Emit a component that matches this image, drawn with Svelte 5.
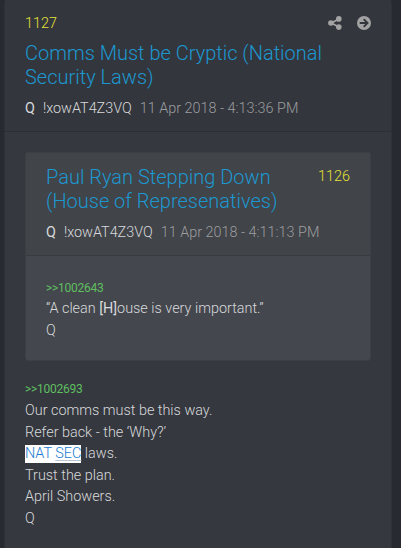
<script lang="ts">
	const trip = '!xowAT4Z3VQ';

	const post = {
		id: 1127,
		title: 'Comms Must be Cryptic (National Security Laws)',
		date: '11 Apr 2018 - 4:13:36 PM',
		ref: '>>1002693'
	};

	const quoted = {
		id: 1126,
		title: 'Paul Ryan Stepping Down (House of Represenatives)',
		date: '11 Apr 2018 - 4:11:13 PM',
		ref: '>>1002643'
	};
</script>

{#snippet meta(date: string)}
	<div class="meta">
		<strong>Q</strong>
		<span class="trip">{trip}</span>
		<time>{date}</time>
	</div>
{/snippet}

<div class="page">
	<article class="card">
		<header class="head">
			<div class="bar">
				<span class="id">{post.id}</span>
				<div class="actions">
					<svg class="share" viewBox="0 0 14 14" aria-label="Share">
						<path d="M11 3 3.2 7 11 11" fill="none" stroke="currentColor" stroke-width="1.8" />
						<circle cx="10.8" cy="2.9" r="2.8" />
						<circle cx="2.9" cy="7" r="2.8" />
						<circle cx="10.8" cy="11.1" r="2.8" />
					</svg>
					<svg class="open" viewBox="0 0 14 14" aria-label="Open">
						<circle cx="7" cy="7" r="7" />
						<path class="arrow" d="M2.7 7H10M6.7 3.2 10.5 7l-3.8 3.8" />
					</svg>
				</div>
			</div>
			<h2 class="title">{post.title}</h2>
			{@render meta(post.date)}
		</header>

		<div class="body">
			<article class="card quoted">
				<header class="head">
					<div class="row">
						<h2 class="title">{quoted.title}</h2>
						<span class="id">{quoted.id}</span>
					</div>
					{@render meta(quoted.date)}
				</header>
				<div class="body">
					<a class="ref" href="#1002643">{quoted.ref}</a>
					<p>“A clean <b>[H]</b>ouse is very important.”</p>
					<p>Q</p>
				</div>
			</article>

			<a class="ref" href="#1002693">{post.ref}</a>
			<p>Our comms must be this way.</p>
			<p>Refer back - the ‘Why?’</p>
			<p><mark>NAT <abbr>SEC</abbr></mark> laws.</p>
			<p>Trust the plan.</p>
			<p>April Showers.</p>
			<p>Q</p>
		</div>
	</article>
</div>

<style>
	:global(body) {
		background: #272a31;
	}

	.page {
		box-sizing: border-box;
		height: 548px;
		padding: 0 9px 0 4px;
		overflow: hidden;
		background: #272a31;
		color: #d8d9db;
		font-family: Roboto, 'Liberation Sans', sans-serif;
		font-size: 14.4px;
		font-weight: 300;
		line-height: 21.6px;
	}

	.card {
		box-sizing: border-box;
		min-height: 570px;
		border: 1px solid #2e3138;
		border-top: 0;
		border-radius: 4px;
		background: #35383f;
	}

	.head {
		padding: 12px 20px 11px;
		border-bottom: 1px solid #2b2e34;
		background: #33363d;
	}

	.bar,
	.row {
		display: flex;
		justify-content: space-between;
	}

	.bar {
		padding-top: 1px;
	}

	.id {
		color: #e6e238;
	}

	.row .id {
		padding-top: 1px;
	}

	.actions {
		display: flex;
		align-items: center;
		gap: 15px;
		height: 20px;
		color: #a3a3a3;
	}

	svg {
		display: block;
		fill: currentColor;
	}

	.share,
	.open {
		width: 14px;
		height: 14px;
	}

	.arrow {
		fill: none;
		stroke: #33363d;
		stroke-width: 1.9;
	}

	.title {
		margin: 0;
		color: #1c98d0;
		font-size: 20px;
		font-weight: 300;
		line-height: 24px;
	}

	.bar + .title {
		margin-top: 6.4px;
	}

	.meta {
		display: flex;
		gap: 8px;
		margin-top: 9px;
		white-space: nowrap;
	}

	.meta strong {
		font-weight: 400;
	}

	time {
		color: #9c9d9f;
	}

	.body {
		padding: 20px;
	}

	.quoted {
		min-height: 0;
		margin-bottom: 17.6px;
		border: 1px solid #3c3f46;
		border-radius: 3px;
		background: #44474e;
	}

	.quoted .head {
		padding-bottom: 11.6px;
		border-color: #383b41;
		background: #414449;
	}

	.quoted .body {
		padding-top: 20.8px;
		padding-bottom: 18.4px;
	}

	p {
		margin: 0;
	}

	b {
		font-weight: 400;
	}

	.ref {
		display: block;
		padding-top: 1px;
		color: #5fbf5f;
		font-size: 12px;
		font-weight: 400;
		letter-spacing: -0.25px;
		line-height: 20.6px;
		text-decoration: none;
	}

	mark {
		padding-bottom: 1px;
		background: #fff;
		color: #1a7ad0;
	}

	abbr {
		text-decoration: underline 1px #bcc6d2;
		text-underline-offset: 2px;
	}
</style>
